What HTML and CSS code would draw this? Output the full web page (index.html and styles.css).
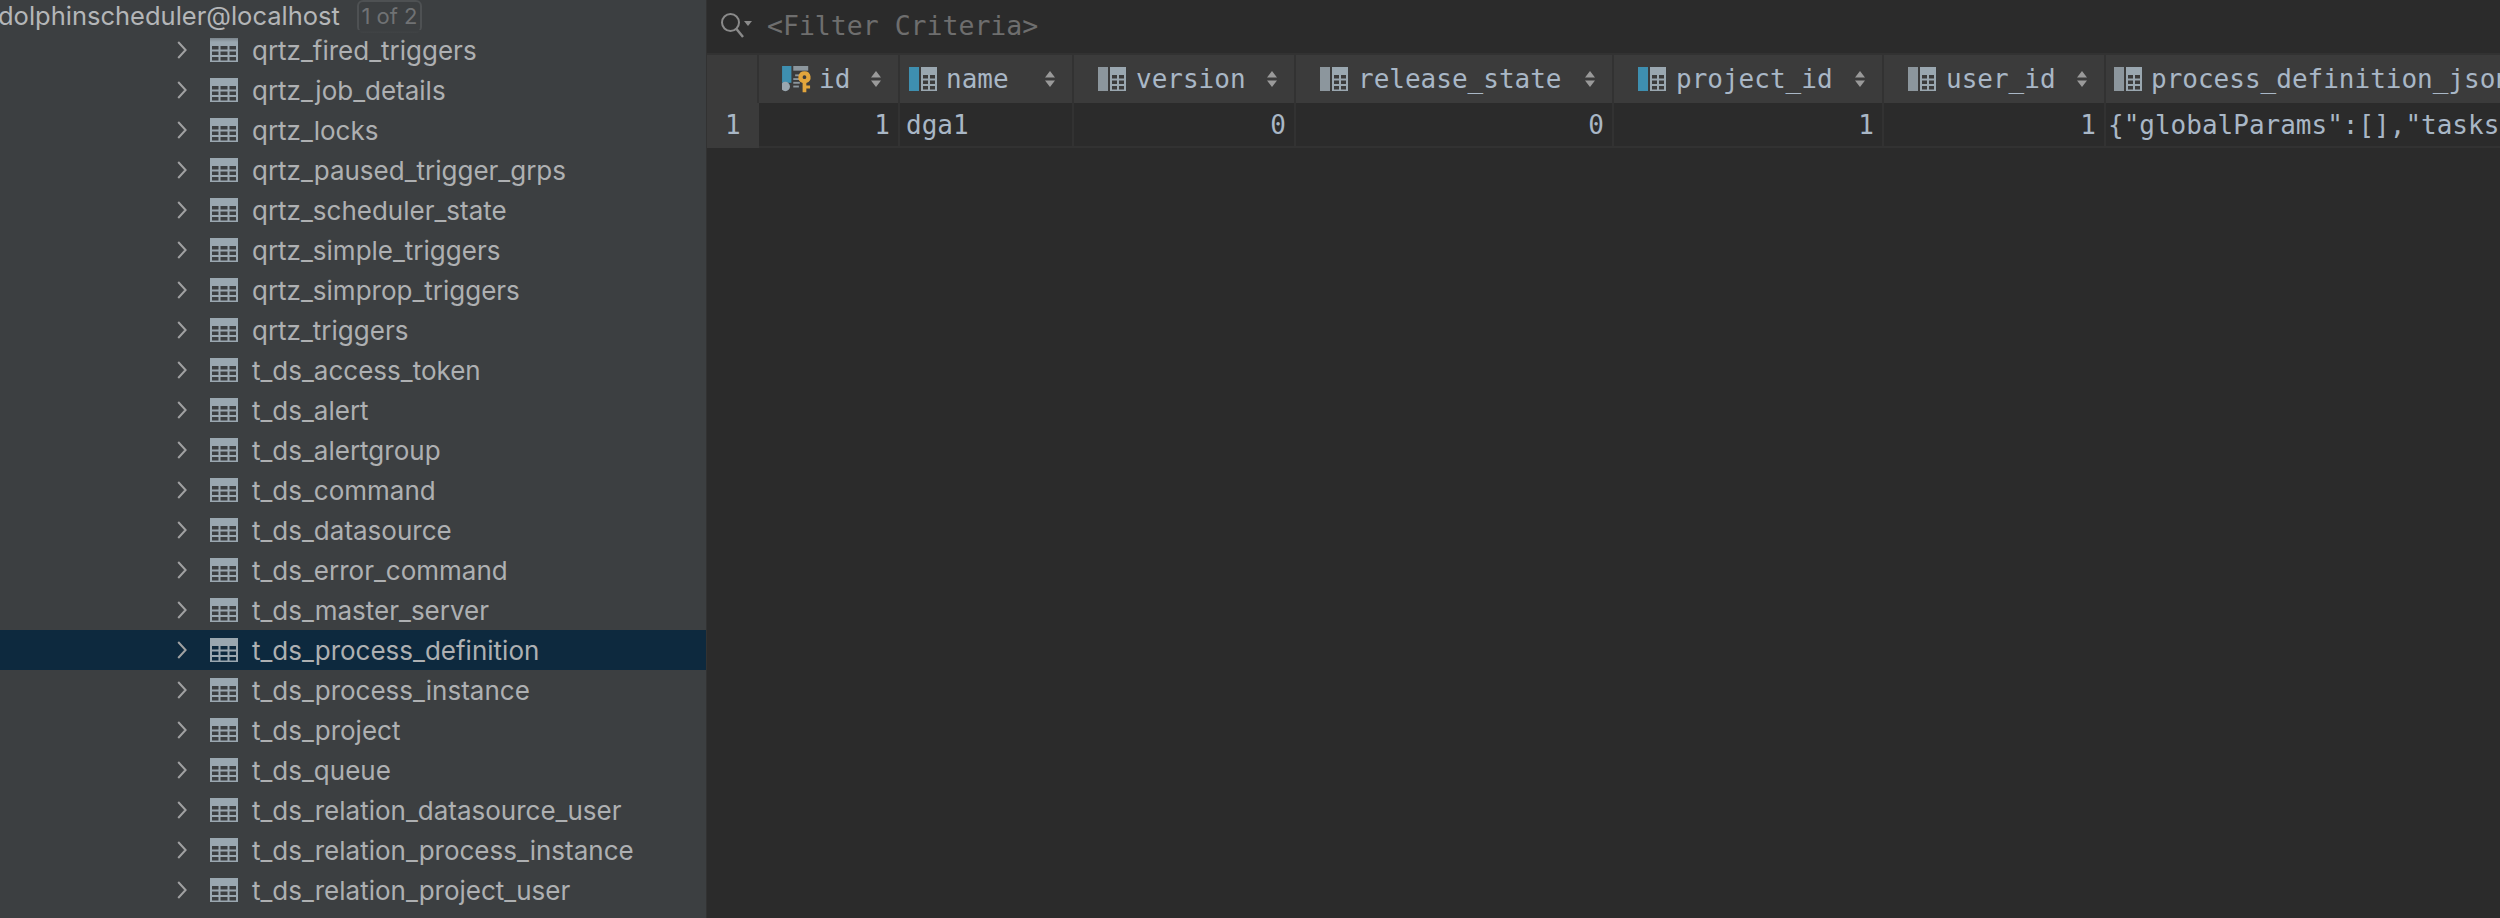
FILE: index.html
```html
<!DOCTYPE html>
<html lang="en">
<head>
<meta charset="utf-8">
<title>DataGrip table view</title>
<link rel="stylesheet" href="styles.css">
</head>
<body>
<svg class="defs" width="0" height="0" aria-hidden="true">
  <symbol id="tbl" viewBox="0 0 28 24">
    <rect width="28" height="24" fill="#9aa7b0"/>
    <g fill="currentColor">
      <rect x="2" y="8" width="6.5" height="3.5"/><rect x="10.5" y="8" width="7" height="3.5"/><rect x="19.5" y="8" width="6.5" height="3.5"/>
      <rect x="2" y="13.5" width="6.5" height="3.5"/><rect x="10.5" y="13.5" width="7" height="3.5"/><rect x="19.5" y="13.5" width="6.5" height="3.5"/>
      <rect x="2" y="19" width="6.5" height="3.5"/><rect x="10.5" y="19" width="7" height="3.5"/><rect x="19.5" y="19" width="6.5" height="3.5"/>
    </g>
  </symbol>
  <symbol id="col" viewBox="0 0 28 24">
    <rect x="0" width="10" height="24" fill="#8c969d"/>
    <rect x="12" width="16" height="24" fill="#9aa7b0"/>
    <g fill="#3b3b3b"><rect x="14" y="8" width="5" height="3.5"/><rect x="21" y="8" width="5" height="3.5"/><rect x="14" y="13.5" width="5" height="3.5"/><rect x="21" y="13.5" width="5" height="3.5"/><rect x="14" y="19" width="5" height="3.5"/><rect x="21" y="19" width="5" height="3.5"/></g>
  </symbol>
  <symbol id="colb" viewBox="0 0 28 24">
    <rect x="0" width="10" height="24" fill="#3e8fb0"/>
    <rect x="12" width="16" height="24" fill="#9aa7b0"/>
    <g fill="#3b3b3b"><rect x="14" y="8" width="5" height="3.5"/><rect x="21" y="8" width="5" height="3.5"/><rect x="14" y="13.5" width="5" height="3.5"/><rect x="21" y="13.5" width="5" height="3.5"/><rect x="14" y="19" width="5" height="3.5"/><rect x="21" y="19" width="5" height="3.5"/></g>
  </symbol>
  <symbol id="chev" viewBox="0 0 10 18">
    <path d="M1.2 1 L8.6 9 L1.2 17" fill="none" stroke="#a0a1a2" stroke-width="2"/>
  </symbol>
  <symbol id="sort" viewBox="0 0 10 16">
    <path d="M5 0 L10 6.5 H0 Z M0 9.5 H10 L5 16 Z" fill="#9a9a9a"/>
  </symbol>
</svg>

<aside class="sidebar">
  <header class="session">
    <span class="session-name">dolphinscheduler@localhost</span>
    <span class="session-badge">1 of 2</span>
  </header>
  <ul class="tree">
    <li class="node"><svg class="chev"><use href="#chev"/></svg><svg class="tbl"><use href="#tbl"/></svg><span>qrtz_fired_triggers</span></li>
    <li class="node"><svg class="chev"><use href="#chev"/></svg><svg class="tbl"><use href="#tbl"/></svg><span>qrtz_job_details</span></li>
    <li class="node"><svg class="chev"><use href="#chev"/></svg><svg class="tbl"><use href="#tbl"/></svg><span>qrtz_locks</span></li>
    <li class="node"><svg class="chev"><use href="#chev"/></svg><svg class="tbl"><use href="#tbl"/></svg><span>qrtz_paused_trigger_grps</span></li>
    <li class="node"><svg class="chev"><use href="#chev"/></svg><svg class="tbl"><use href="#tbl"/></svg><span>qrtz_scheduler_state</span></li>
    <li class="node"><svg class="chev"><use href="#chev"/></svg><svg class="tbl"><use href="#tbl"/></svg><span>qrtz_simple_triggers</span></li>
    <li class="node"><svg class="chev"><use href="#chev"/></svg><svg class="tbl"><use href="#tbl"/></svg><span>qrtz_simprop_triggers</span></li>
    <li class="node"><svg class="chev"><use href="#chev"/></svg><svg class="tbl"><use href="#tbl"/></svg><span>qrtz_triggers</span></li>
    <li class="node"><svg class="chev"><use href="#chev"/></svg><svg class="tbl"><use href="#tbl"/></svg><span>t_ds_access_token</span></li>
    <li class="node"><svg class="chev"><use href="#chev"/></svg><svg class="tbl"><use href="#tbl"/></svg><span>t_ds_alert</span></li>
    <li class="node"><svg class="chev"><use href="#chev"/></svg><svg class="tbl"><use href="#tbl"/></svg><span>t_ds_alertgroup</span></li>
    <li class="node"><svg class="chev"><use href="#chev"/></svg><svg class="tbl"><use href="#tbl"/></svg><span>t_ds_command</span></li>
    <li class="node"><svg class="chev"><use href="#chev"/></svg><svg class="tbl"><use href="#tbl"/></svg><span>t_ds_datasource</span></li>
    <li class="node"><svg class="chev"><use href="#chev"/></svg><svg class="tbl"><use href="#tbl"/></svg><span>t_ds_error_command</span></li>
    <li class="node"><svg class="chev"><use href="#chev"/></svg><svg class="tbl"><use href="#tbl"/></svg><span>t_ds_master_server</span></li>
    <li class="node selected"><svg class="chev"><use href="#chev"/></svg><svg class="tbl"><use href="#tbl"/></svg><span>t_ds_process_definition</span></li>
    <li class="node"><svg class="chev"><use href="#chev"/></svg><svg class="tbl"><use href="#tbl"/></svg><span>t_ds_process_instance</span></li>
    <li class="node"><svg class="chev"><use href="#chev"/></svg><svg class="tbl"><use href="#tbl"/></svg><span>t_ds_project</span></li>
    <li class="node"><svg class="chev"><use href="#chev"/></svg><svg class="tbl"><use href="#tbl"/></svg><span>t_ds_queue</span></li>
    <li class="node"><svg class="chev"><use href="#chev"/></svg><svg class="tbl"><use href="#tbl"/></svg><span>t_ds_relation_datasource_user</span></li>
    <li class="node"><svg class="chev"><use href="#chev"/></svg><svg class="tbl"><use href="#tbl"/></svg><span>t_ds_relation_process_instance</span></li>
    <li class="node"><svg class="chev"><use href="#chev"/></svg><svg class="tbl"><use href="#tbl"/></svg><span>t_ds_relation_project_user</span></li>
  </ul>
</aside>

<main class="results">
  <div class="filter">
    <svg class="search" viewBox="0 0 32 26">
      <circle cx="10.5" cy="10.5" r="8.5" fill="none" stroke="#8a8a8a" stroke-width="2"/>
      <path d="M16.5 17 L23 25" stroke="#8a8a8a" stroke-width="2.4"/>
      <path d="M24 9 H32 L28 14 Z" fill="#8a8a8a"/>
    </svg>
    <span class="filter-text">&lt;Filter Criteria&gt;</span>
  </div>
  <div class="grid">
    <div class="th corner"></div>
    <div class="th th-id">
      <svg class="icon-id" viewBox="0 0 32 30">
        <rect x="0" y="0" width="10" height="18" fill="#3e8fb0"/>
        <circle cx="3.500" cy="22" r="5" fill="#9aa7b0"/>
        <g fill="#8c969d"><rect x="12" y="0" width="16" height="5"/><rect x="14" y="9" width="6" height="2"/><rect x="12" y="13" width="7" height="2"/><rect x="12" y="17" width="7" height="2"/><rect x="12" y="21" width="6" height="2"/></g>
        <path fill="#e2a53c" fill-rule="evenodd" d="M24 5.500a6.500 6.500 0 0 1 2 12.700V21h4v3h-4v4h-4V18.200A6.500 6.500 0 0 1 24 5.500Zm0 4.500a2 2 0 1 0 0 4a2 2 0 0 0 0-4Z"/>
      </svg>
      <span class="label">id</span><svg class="sort"><use href="#sort"/></svg>
    </div>
    <div class="th th-tight"><svg class="col"><use href="#colb"/></svg><span class="label">name</span><svg class="sort"><use href="#sort"/></svg></div>
    <div class="th"><svg class="col"><use href="#col"/></svg><span class="label">version</span><svg class="sort"><use href="#sort"/></svg></div>
    <div class="th"><svg class="col"><use href="#col"/></svg><span class="label">release_state</span><svg class="sort"><use href="#sort"/></svg></div>
    <div class="th"><svg class="col"><use href="#colb"/></svg><span class="label">project_id</span><svg class="sort"><use href="#sort"/></svg></div>
    <div class="th"><svg class="col"><use href="#col"/></svg><span class="label">user_id</span><svg class="sort"><use href="#sort"/></svg></div>
    <div class="th th-tight th-last"><svg class="col"><use href="#col"/></svg><span class="label">process_definition_json</span></div>

    <div class="rownum">1</div>
    <div class="td num">1</div>
    <div class="td td-name">dga1</div>
    <div class="td num">0</div>
    <div class="td num">0</div>
    <div class="td num">1</div>
    <div class="td num">1</div>
    <div class="td td-last">{"globalParams":[],"tasks":[{"type":"SHELL","id":"tasks-1"}]}</div>
  </div>
</main>
</body>
</html>
```
FILE: styles.css
```css
* { box-sizing: border-box; }
html, body { height: 100%; }
body {
  margin: 0;
  display: flex;
  height: 918px;
  overflow: hidden;
  background: #2b2b2b;
}
.defs { position: absolute; }

/* Left tree */
.sidebar {
  width: 707px;
  flex: none;
  background: #3c3f41;
  border-right: 1px solid #323232;
  font-family: "Inter", "Liberation Sans", sans-serif;
  font-size: 26px;
  color: #aeb0b2;
  position: relative;
  overflow: hidden;
}
.session {
  height: 30px;
  display: flex;
  align-items: center;
  color: #b4b6b8;
  margin-left: -2px;
  position: relative;
}
.session::after {
  content: "";
  position: absolute;
  left: 0; right: 0; top: 30px;
  height: 12px;
  background: linear-gradient(#3c3f41, rgba(60,63,65,0));
  z-index: 1;
}
.session-name { width: 359px; flex: none; font-size: 25.5px; margin-top: 1px; }
.session-badge {
  width: 65px;
  height: 33px;
  margin-top: 2px;
  border: 2px solid #4e5153;
  border-radius: 6px;
  font-size: 22px;
  color: #707274;
  display: flex;
  align-items: center;
  justify-content: center;
}
.tree { list-style: none; margin: 0; padding: 0; }
.node {
  height: 40px;
  padding-left: 177px;
  display: flex;
  align-items: center;
  color: #aeb0b2;
}
.node.selected { background: #0d293e; color: #aeb0b2; }
.chev { width: 10px; height: 18px; flex: none; margin-right: 23px; }
.tbl { width: 28px; height: 24px; flex: none; margin-right: 14px; color: #3c3f41; }
.selected .tbl { color: #0d293e; }

/* Results */
.results {
  flex: 1;
  min-width: 0;
  font-family: "DejaVu Sans Mono", "Liberation Mono", monospace;
  font-size: 26px;
  color: #a9b7c6;
  overflow: hidden;
}
.filter {
  height: 53px;
  padding-left: 13px;
  display: flex;
  align-items: center;
}
.search { width: 32px; height: 26px; flex: none; margin-right: 15px; margin-top: -3px; }
.filter-text { color: #6e6e6e; margin-top: -2px; font-size: 26.5px; }

.grid {
  display: grid;
  grid-template-columns: 52px 141px 174px 222px 318px 270px 222px 500px;
  grid-template-rows: 50px 45px;
}
.th {
  background: #3b3b3b;
  border-right: 2px solid #323232;
  border-top: 2px solid #323232;
  padding-left: 24px;
  display: flex;
  align-items: center;
  white-space: nowrap;
  overflow: hidden;
}
.th.corner { padding: 0; }
.th-tight { padding-left: 9px; }
.th-last { padding-left: 8px; }
.th-id { padding-left: 23px; }
.th-last { border-right: 0; }
.col { width: 28px; height: 24px; flex: none; margin-right: 10px; }
.th-tight .col { margin-right: 9px; }
.icon-id { width: 30px; height: 28px; flex: none; margin-top: 2px; margin-right: 7px; }
.sort { width: 10px; height: 16px; flex: none; margin-left: auto; margin-right: 17px; }

.rownum {
  background: #3b3b3b;
  padding-left: 18px;
  display: flex;
  align-items: center;
  border-bottom: 1px solid #3b3b3b;
}
.td {
  border-right: 2px solid #323232;
  border-bottom: 2px solid #323232;
  padding: 0 8px;
  display: flex;
  align-items: center;
  white-space: nowrap;
  overflow: hidden;
}
.td.num { justify-content: flex-end; }
.td-name { padding-left: 6px; }
.td-last { border-right: 0; padding-left: 2px; }
```
